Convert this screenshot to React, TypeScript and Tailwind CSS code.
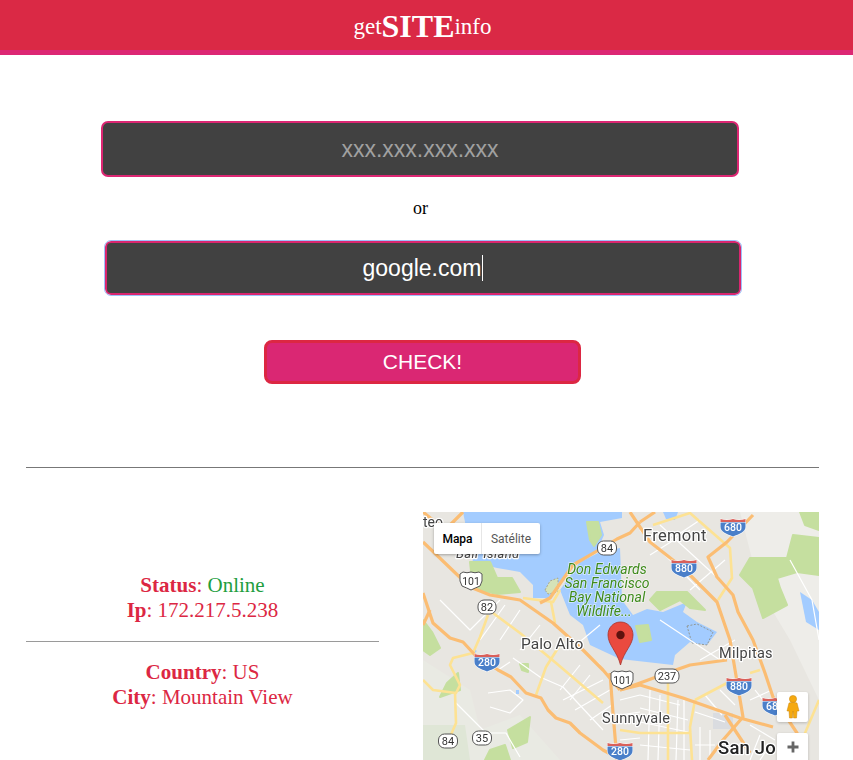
import React from "react";

const serif = { fontFamily: '"Liberation Serif", serif' };

function Interstate({ x, y, n }: { x: number; y: number; n: string }) {
  return (
    <g transform={`translate(${x} ${y})`}>
      <path d="M-13 -7 Q-13 -9 -12.5 -9.5 Q-6 -7.5 0 -9.5 Q6 -7.5 12.5 -9.5 Q13 -9 13 -7 L13 -1 C13 4 6 7 0 9 C-6 7 -13 4 -13 -1 Z" fill="#fff" />
      <path d="M-12.5 -5.5 L12.5 -5.5 L12.5 -1 C12.5 3.6 6 6.4 0 8.4 C-6 6.4 -12.5 3.6 -12.5 -1 Z" fill="#4a7fc9" />
      <path d="M-12.5 -9 Q-6 -7 0 -9 Q6 -7 12.5 -9 L12.5 -6 L-12.5 -6 Z" fill="#d9605a" />
      <text x="0" y="3" textAnchor="middle" fontSize="10.5" fontWeight="500" fill="#fff" style={{ fontFamily: "Roboto, sans-serif" }}>{n}</text>
    </g>
  );
}

function UsShield({ x, y, n }: { x: number; y: number; n: string }) {
  return (
    <g transform={`translate(${x} ${y})`}>
      <path d="M-11 -7 L-8 -9 Q-4 -7.5 0 -9 Q4 -7.5 8 -9 L11 -7 Q12 1 9 5 Q4 7 0 9 Q-4 7 -9 5 Q-12 1 -11 -7 Z" fill="#fff" stroke="#555" strokeWidth="1" />
      <text x="0" y="3.5" textAnchor="middle" fontSize="10.5" fill="#333" style={{ fontFamily: "Roboto, sans-serif" }}>{n}</text>
    </g>
  );
}

function Oval({ x, y, n, w = 9.5 }: { x: number; y: number; n: string; w?: number }) {
  return (
    <g transform={`translate(${x} ${y})`}>
      <rect x={-w} y={-7} width={w * 2} height={14} rx={6} fill="#fff" stroke="#555" strokeWidth="1" />
      <text x="0" y="4" textAnchor="middle" fontSize="11" fill="#333" style={{ fontFamily: "Roboto, sans-serif" }}>{n}</text>
    </g>
  );
}

const highways = [
  "M423 542 L470 587 L490 595 L520 600 L553 623 L583 650 L603 670 L620 690",
  "M423 593 L433 623 L450 638 L463 642 L475 655 L498 670 L511 677 L526 693 L541 698 L548 710 L556 718 L570 723 L580 733 L603 750 L625 762",
  "M630 512 L650 542 L683 568 L717 602 L730 640 L743 717 L723 740 L708 760",
  "M753 515 L727 542 L708 557 L717 577 L733 595 L738 612 L753 640 L765 673 L773 697 L797 733 L806 760",
  "M620 690 L640 683 L667 673 L690 665 L727 660",
  "M640 522 L630 533 L617 539 L597 551 L573 565 L550 598 L540 603",
  "M620 690 L640 685 L683 698 L740 718 L773 727",
  "M725 715 L750 753",
  "M610 673 L613 713 L617 760",
  "M423 512 L445 530 L463 512",
  "M640 522 L655 512",
  "M423 625 L430 610",
];

const yellows = [
  "M523 598 L553 602 L560 590",
  "M551 602 L555 623",
  "M488 615 L480 637 L473 653 L453 658 L450 665 L460 685 L456 693 L433 690 L423 680",
  "M455 693 L456 723 L450 737",
  "M493 613 L520 633 L556 663 L603 703",
  "M563 640 L546 667 L536 695",
  "M668 683 L668 760",
  "M695 700 L690 727 L692 760",
  "M695 700 L727 683",
  "M640 733 L690 733",
  "M750 673 L760 670",
  "M653 525 L690 513 L730 548 L732 578 L718 600",
  "M620 730 L640 733",
  "M800 745 L819 700",
];

const minor = [
  "M513 658 L540 677 L563 687 L603 730",
  "M510 662 L498 670",
  "M488 693 L510 690 L523 700 L510 713 L490 707",
  "M456 703 L486 733 L506 733 L520 757",
  "M440 600 L470 630 L500 600 M505 605 L480 640 M520 610 L500 640 M540 625 L520 650",
  "M560 630 L600 665 M570 650 L600 625 M580 665 L560 690 M590 675 L570 700",
  "M563 700 L603 680 M575 710 L610 690 M590 720 L612 705",
  "M640 695 L680 705 M640 708 L688 720 M640 722 L688 732 M640 745 L690 750",
  "M650 690 L648 760 M660 695 L658 760 M678 700 L676 760 M684 700 L684 760",
  "M695 745 L715 745 M700 727 L700 760 M710 730 L710 760",
  "M695 712 L725 722 M705 695 L722 715 M720 690 L735 705",
  "M750 725 L775 740 M755 690 L775 715 M750 700 L772 690 M760 735 L750 760 M770 745 L760 760",
  "M640 530 L700 590 M660 525 L720 580 M650 555 L690 530 M690 590 L725 560 M670 540 L700 520",
  "M790 560 L812 600 L819 640",
  "M620 700 L640 695 M620 715 L640 712 M620 740 L640 738",
  "M660 620 L720 660 M700 660 L735 640",
];

function MapArt() {
  return (
    <svg viewBox="423 512 396 250" width="396" height="250" className="block blur-[0.35px]">
      <rect x="423" y="512" width="396" height="250" fill="#e8e6e1" />
      {/* hills */}
      <path d="M423 660 L470 690 L480 730 L520 715 L560 760 L423 760 Z" fill="#e9eae3" />
      <path d="M423 725 L465 725 L470 760 L423 760 Z" fill="#dfe6d6" />
      <path d="M740 512 L819 512 L819 700 L790 640 L760 590 Z" fill="#eeede9" />
      {/* water */}
      <path d="M463 512 L622 512 L622 518 L600 522 L604 535 L597 551 L573 565 L550 598 L533 598 L533 585 L520 572 L497 568 L473 562 Z" fill="#a3ccff" />
      <path d="M580 562 L600 552 L620 548 L622 600 L633 615 L647 609 L663 612 L687 602 L683 612 L697 622 L717 632 L707 645 L690 642 L675 655 L673 665 L620 659 L590 645 L583 625 L570 615 L560 590 Z" fill="#a3ccff" />
      <path d="M800 592 L812 600 L819 612 L819 630 L806 622 Z" fill="#a3ccff" />
      <path d="M663 512 L678 512 L675 520 L666 519 Z" fill="#a3ccff" />
      <circle cx="475" cy="651" r="1.5" fill="#a3ccff" />
      <rect x="516" y="690" width="3" height="4" fill="#a3ccff" />
      <rect x="713" y="713" width="20" height="16" fill="#dadce0" />
      {/* parks */}
      <g stroke="#c5df9f" strokeWidth="2" strokeLinejoin="round" fill="#c5df9f">
        <path d="M470 562 L490 562 L497 578 L512 578 L520 592 L497 594 L480 590 L472 580 Z" />
        <path d="M587 522 L598 522 L601 535 L594 546 L590 540 Z" />
        <path d="M740 575 L750 558 L787 558 L793 535 L819 538 L819 575 L797 572 L777 578 L780 588 L787 605 L763 618 L753 588 Z" />
        <path d="M657 592 L687 592 L705 610 L690 608 L680 600 L660 610 L650 600 Z" />
        <path d="M636 626 L648 625 L651 640 L640 642 Z" />
        <path d="M508 730 L530 717 L527 742 L513 748 Z" />
        <path d="M423 620 L432 632 L440 648 L430 655 L423 650 Z" />
        <path d="M447 683 L458 673 L460 690 L440 697 Z" />
        <path d="M490 750 L505 745 L510 760 L485 760 Z" />
        <path d="M800 512 L819 512 L819 530 L805 525 Z" />
        <path d="M520 664 L528 664 L528 672 L522 670 Z" />
      </g>
      <path d="M545 590 L550 581 L558 578 L558 592 L548 594 Z" fill="#d5e3b8" stroke="#a59a7e" strokeWidth="0.8" strokeDasharray="2 1.5" />
      <path d="M687 626 L697 624 L713 632 L707 645 L692 643 Z" fill="#a3ccff" stroke="#8e8a78" strokeWidth="0.8" strokeDasharray="2 1.5" />
      {/* roads */}
      <g fill="none" stroke="#fff" strokeWidth="1.2" strokeLinejoin="round">
        {minor.map((d) => <path key={d} d={d} />)}
      </g>
      <g fill="none" stroke="#fde293" strokeWidth="2.6" strokeLinejoin="round">
        {yellows.map((d) => <path key={d} d={d} />)}
      </g>
      <g fill="none" stroke="#fbbd73" strokeWidth="3.2" strokeLinejoin="round">
        {highways.map((d) => <path key={d} d={d} />)}
      </g>
      {/* shields */}
      <Interstate x={733} y={528} n="680" />
      <Interstate x={684} y={569} n="880" />
      <Interstate x={487} y={663} n="280" />
      <Interstate x={739} y={687} n="880" />
      <Interstate x={620} y={752} n="280" />
      <Interstate x={775} y={707} n="680" />
      <UsShield x={471} y={581} n="101" />
      <UsShield x={622} y={680} n="101" />
      <Oval x={607} y={548} n="84" />
      <Oval x={487} y={607} n="82" w={9} />
      <Oval x={448} y={741} n="84" />
      <Oval x={482} y={738} n="35" />
      <Oval x={667} y={676} n="237" w={12} />
      {/* labels */}
      <g style={{ fontFamily: "Roboto, sans-serif", paintOrder: "stroke" }} stroke="#fff" strokeWidth="2.5" strokeLinejoin="round" fill="#444">
        <text x="423" y="527" fontSize="14">teo</text>
        <text x="456" y="558" fontSize="13" fontStyle="italic" letterSpacing="0.4">Bair Island</text>
        <text x="643" y="541" fontSize="16.5" letterSpacing="0.3">Fremont</text>
        <text x="521" y="649" fontSize="15.5">Palo Alto</text>
        <text x="719" y="658" fontSize="14.5" letterSpacing="0.3">Milpitas</text>
        <text x="602" y="723" fontSize="14.5" letterSpacing="0.3">Sunnyvale</text>
        <text x="718" y="754" fontSize="18.5" fontWeight="500" fill="#222" letterSpacing="0.2">San Jo</text>
      </g>
      <g style={{ fontFamily: "Roboto, sans-serif", paintOrder: "stroke" }} stroke="#fff" strokeOpacity="0.6" strokeWidth="1.5" fill="#3f8a1c" fontSize="14" fontStyle="italic" textAnchor="middle">
        <text x="607" y="574">Don Edwards</text>
        <text x="607" y="588">San Francisco</text>
        <text x="607" y="602">Bay National</text>
        <text x="604" y="616">Wildlife...</text>
      </g>
      {/* pin */}
      <path d="M620.5 622 C613 622 608 628 608 635 C608 645 617 651 620.5 665 C624 651 633 645 633 635 C633 628 628 622 620.5 622 Z" fill="#ea4a3f" stroke="#a8342b" strokeWidth="0.8" />
      <circle cx="620.5" cy="635" r="4.2" fill="#5e120e" />
    </svg>
  );
}

export default function App() {
  return (
    <div className="h-[760px] w-[853px] overflow-hidden bg-white text-black" style={serif}>
      <header className="flex h-[55px] items-center justify-center border-b-[5px] border-[#dc2773] bg-[#da2945] pt-[2px] pr-[8px] text-[23px] leading-none text-white">
        <span>get</span>
        <span className="text-[32px] font-bold">SITE</span>
        <span>info</span>
      </header>

      <input
        readOnly
        placeholder="xxx.xxx.xxx.xxx"
        className="ml-[101px] mt-[66px] block h-[56px] w-[638px] rounded-[7px] border-2 border-[#dc2773] bg-[#414141] text-center text-[23px] text-white outline-none placeholder:text-[#a0a0a0]"
        style={{ fontFamily: '"Liberation Sans", sans-serif' }}
      />

      <div className="flex h-[64px] items-center justify-center pr-[12px] pb-[2px] text-[18px]">or</div>

      <div
        className="ml-[105px] flex h-[54px] w-[636px] items-center justify-center rounded-[6px] border-2 border-[#d9266f] bg-[#414141] text-[23px] text-white outline-1 outline-[#9cc2fa]"
        style={{ fontFamily: '"Liberation Sans", sans-serif', outlineStyle: "solid" }}
      >
        <span>google.com</span>
        <span className="ml-[1px] h-[26px] w-px bg-white" />
      </div>

      <button
        className="ml-[264px] mt-[45px] block h-[44px] w-[317px] rounded-[8px] border-[3px] border-[#dc2743] bg-[#da2773] text-[21px] text-white"
        style={{ fontFamily: '"Liberation Sans", sans-serif' }}
      >
        CHECK!
      </button>

      <div className="ml-[26px] mt-[83px] h-px w-[793px] bg-[#777]" />

      <div className="ml-[26px] mt-[44px] flex w-[793px] justify-between">
        <div className="w-[353px] pt-[61px] text-center text-[21px] leading-[25px] text-[#dc2743]">
          <div>
            <b>Status</b>: <span className="text-[#1e9e3e]">Online</span>
          </div>
          <div>
            <b>Ip</b>: 172.217.5.238
          </div>
          <div className="my-[18px] h-px bg-[#9a9a9a]" />
          <div>
            <b>Country</b>: US
          </div>
          <div>
            <b>City</b>: Mountain View
          </div>
        </div>

        <div className="relative h-[248px] w-[396px] overflow-hidden">
          <MapArt />
          <div
            className="absolute left-[11px] top-[11px] flex h-[31px] w-[106px] items-center rounded-[2px] bg-white text-[12px] shadow-[0_1px_3px_rgba(0,0,0,0.3)]"
            style={{ fontFamily: "Roboto, sans-serif" }}
          >
            <span className="flex h-full w-[48px] items-center justify-center border-r border-[#e6e6e6] font-medium text-black">Mapa</span>
            <span className="flex h-full flex-1 items-center justify-center text-[#565656]">Satélite</span>
          </div>
          <div className="absolute left-[354px] top-[180px] flex h-[30px] w-[31px] items-center justify-center rounded-[2px] bg-white shadow-[0_1px_3px_rgba(0,0,0,0.2)]">
            <svg width="14" height="24" viewBox="0 0 14 24">
              <circle cx="7" cy="4" r="3.6" fill="#f5a90f" stroke="#c8850a" strokeWidth="0.5" />
              <path d="M3 8 Q7 6.5 11 8 L13 16 L11 16 L10.5 23 L7.6 23 L7 16 L6.4 23 L3.5 23 L3 16 L1 16 Z" fill="#f5a90f" stroke="#c8850a" strokeWidth="0.5" />
            </svg>
          </div>
          <div className="absolute left-[354px] top-[221px] flex h-[40px] w-[31px] items-start justify-center rounded-[2px] bg-white pt-[8px] shadow-[0_1px_3px_rgba(0,0,0,0.2)]">
            <svg width="12" height="12" viewBox="0 0 12 12">
              <path d="M4.6 0.5 H7.4 V4.6 H11.5 V7.4 H7.4 V11.5 H4.6 V7.4 H0.5 V4.6 H4.6 Z" fill="#666" />
            </svg>
          </div>
        </div>
      </div>
    </div>
  );
}
